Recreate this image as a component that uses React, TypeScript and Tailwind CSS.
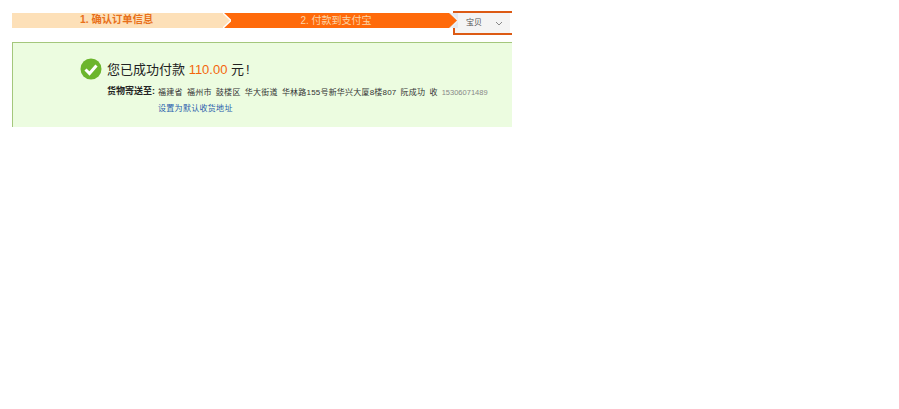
import React from "react";

const cjk = "font-['Liberation_Sans','Noto_Sans_CJK_SC',sans-serif]";

const addressParts = ["福建省", "福州市", "鼓楼区", "华大街道"];

function CheckBadge(): React.ReactElement {
  return (
    <svg width="22" height="22" viewBox="0 0 22 22" className="shrink-0">
      <circle cx="11" cy="11" r="10.5" fill="#6cb52d" />
      <path d="M5.5 11.5 L9.5 15.5 L16.5 7.5" fill="none" stroke="#fff" strokeWidth="3" />
    </svg>
  );
}

export default function App(): React.ReactElement {
  return (
    <div className={`${cjk} w-[899px] h-[409px] bg-white pl-[12px] pt-[11px] overflow-hidden`}>
      <div className="w-[500px]">
        {/* Steps */}
        <div className="flex h-[25px] items-start">
          <div className="relative mt-[2px] flex h-[15px] w-[211px] items-center bg-[#fde0b8] pl-[68px] text-[10.3px] font-bold leading-none text-[#e8701a]">
            1. 确认订单信息
          </div>
          <div className="relative mt-[2px] flex h-[15px] w-[226px] items-center justify-center bg-[#ff6a0a] text-[10px] leading-none text-[#fcd5a8]">
            <svg width="8" height="15" viewBox="0 0 8 15" className="absolute left-0 top-0">
              <path d="M0 0 L8 7.5 L0 15 Z" fill="#fde0b8" />
              <path d="M0 0 L8 7.5 L0 15" fill="none" stroke="#fff" strokeWidth="1.5" />
            </svg>
            2. 付款到支付宝
            <svg width="9" height="15" viewBox="0 0 9 15" className="absolute right-[-9px] top-0">
              <rect x="0" width="9" height="15" fill="#e4e8ee" />
              <path d="M0 0 L8 7.5 L0 15 Z" fill="#ff6a0a" />
              <path d="M2 0 L9 7.5 L2 15" fill="none" stroke="#ffffff" strokeWidth="1" opacity="0.6" />
            </svg>
          </div>
          <div className="ml-[4px] flex h-[24px] w-[59px] items-center border-y-[2px] border-l-[2px] border-[#dc5a14] bg-[#f4f4f4] pl-[11px] text-[8px] text-[#555]">
            宝贝
            <svg width="8" height="5" viewBox="0 0 8 5" className="ml-[13px]">
              <path d="M1 1 L4 4 L7 1" fill="none" stroke="#888" strokeWidth="1" />
            </svg>
            <div className="ml-auto h-full w-[2px] bg-white" />
          </div>
        </div>

        {/* Success panel */}
        <div className="mt-[6px] h-[85px] border-l border-t border-[#a4c77c] bg-[#ecfce0] pl-[67px] pt-[15px]">
          <div className="flex items-center gap-[5px]">
            <CheckBadge />
            <div className="text-[13px] leading-none text-[#222]">
              您已成功付款 <span className="font-['Liberation_Sans'] text-[#f4660c]">110.00</span> 元<span className="ml-[2px]">!</span>
            </div>
          </div>
          <div className="ml-[27px] mt-[3px] flex text-[8px] leading-[16px] text-[#333]">
            <div className="w-[51px] shrink-0 text-[9px] font-bold text-[#222]">货物寄送至:</div>
            <div className="pt-[2px]">
              <div className="flex gap-[4px] whitespace-nowrap tracking-[0.3px]">
                {addressParts.map((part) => (
                  <span key={part}>{part}</span>
                ))}
                <span className="tracking-[0.2px]">华林路155号新华兴大厦8楼807</span>
                <span>阮成功</span>
                <span>收</span>
                <span className="text-[7.5px] tracking-normal text-[#888]">15306071489</span>
              </div>
              <div className="tracking-[0.3px] text-[#2a5cad]">设置为默认收货地址</div>
            </div>
          </div>
        </div>
      </div>
    </div>
  );
}
